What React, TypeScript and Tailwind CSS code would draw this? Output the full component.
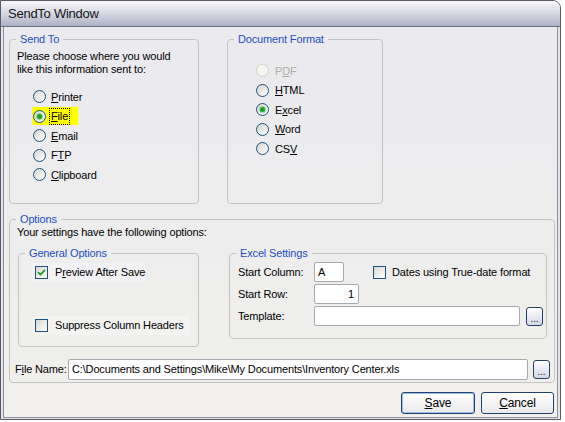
import React from "react";

function Radio({ checked = false, disabled = false }: { checked?: boolean; disabled?: boolean }) {
  return (
    <span
      className={
        disabled
          ? "flex h-[13px] w-[13px] shrink-0 items-center justify-center rounded-full border border-[#d2d0c6] bg-[#f5f5f2]"
          : "flex h-[13px] w-[13px] shrink-0 items-center justify-center rounded-full border border-[#1c5180] bg-linear-to-br from-[#d4d4ce] to-white"
      }
    >
      {checked && <span className="h-[5px] w-[5px] rounded-full bg-[#21a121] shadow-[0_0_0_1px_#9ad69a]" />}
    </span>
  );
}

function Check({ checked = false }: { checked?: boolean }) {
  return (
    <span className="flex h-[13px] w-[13px] shrink-0 items-center justify-center border border-[#1c5180] bg-linear-to-br from-[#d8d8d2] to-white">
      {checked && (
        <svg width="9" height="9" viewBox="0 0 9 9">
          <path d="M1 4.2 L3.4 6.6 L8 1.8" fill="none" stroke="#21a121" strokeWidth="1.9" />
        </svg>
      )}
    </span>
  );
}

function Group({ title, className, children }: { title: string; className: string; children?: React.ReactNode }) {
  return (
    <fieldset className={className}>
      <legend className="ml-[6px] whitespace-nowrap px-[4px] leading-[13px] text-[#1e4fbf]">{title}</legend>
      {children}
    </fieldset>
  );
}

function Dots() {
  return (
    <span className="flex h-[19px] w-[17px] shrink-0 items-end justify-center rounded-[3px] border border-[#25416a] bg-linear-to-b from-white to-[#d3d7e6] pb-[2px] text-[10px] leading-[8px] text-[#222]">
      ...
    </span>
  );
}

function Field({ className, children }: { className: string; children?: React.ReactNode }) {
  return <div className={className}>{children}</div>;
}

export default function App() {
  return (
    <div className="relative h-[422px] w-[565px] overflow-hidden whitespace-nowrap bg-white font-['Liberation_Sans',Arial,sans-serif] text-[11px] tracking-[-0.15px] text-black">
      <div className="flex h-[420px] w-[561px] flex-col overflow-hidden rounded-tr-[8px] border border-[#575a68]">
        <div className="flex h-[25px] shrink-0 items-center bg-linear-to-b from-[#f7f7fa] via-[#d6d7e2] to-[#aeb1c6] pl-[7px] text-[13px] tracking-[-0.25px] text-[#151515]">
          SendTo Window
        </div>
        <div className="flex flex-1 flex-col border-t border-[#6c6f7e]">
          <div className="flex flex-1 flex-col border-x-2 border-b border-[#e3e3ea]">
            <div className="flex flex-1 flex-col border-x border-b border-[#8d8f9c] bg-linear-to-b from-[#eaeaef] to-[#f1f0ec] pl-[5px] pt-[6px]">
              {/* Row 1 */}
              <div className="flex">
                <Group title="Send To" className="h-[171px] w-[190px] rounded-[4px] border border-[#c4c4c2]">
                  <div className="px-[7px] pt-[4px] leading-[13px]">
                    <div>Please choose where you would</div>
                    <div>like this information sent to:</div>
                  </div>
                  <div className="mt-[11px] flex flex-col pl-[23px]">
                    <div className="flex h-[19.5px] items-center gap-[5px]">
                      <Radio />
                      <span>
                        <span className="underline">P</span>rinter
                      </span>
                    </div>
                    <div className="flex h-[19.5px] items-center">
                      <div className="-ml-[1px] flex h-[18px] w-[46px] items-center gap-[4px] bg-[#ffff00] pl-[1px]">
                        <Radio checked />
                        <span className="px-[1px] leading-[15px] outline-1 outline-dotted outline-black">
                          <span className="underline">F</span>ile
                        </span>
                      </div>
                    </div>
                    <div className="flex h-[19.5px] items-center gap-[5px]">
                      <Radio />
                      <span>
                        <span className="underline">E</span>mail
                      </span>
                    </div>
                    <div className="flex h-[19.5px] items-center gap-[5px]">
                      <Radio />
                      <span>
                        F<span className="underline">T</span>P
                      </span>
                    </div>
                    <div className="flex h-[19.5px] items-center gap-[5px]">
                      <Radio />
                      <span>
                        <span className="underline">C</span>lipboard
                      </span>
                    </div>
                  </div>
                </Group>
                <Group title="Document Format" className="ml-[28px] h-[171px] w-[156px] rounded-[4px] border border-[#c4c4c2]">
                  <div className="flex flex-col pl-[28px] pt-[15px]">
                    <div className="flex h-[19.5px] items-center gap-[6px] text-[#b0aea4]">
                      <Radio disabled />
                      <span>
                        P<span className="underline">D</span>F
                      </span>
                    </div>
                    <div className="flex h-[19.5px] items-center gap-[6px]">
                      <Radio />
                      <span>
                        <span className="underline">H</span>TML
                      </span>
                    </div>
                    <div className="flex h-[19.5px] items-center gap-[6px]">
                      <Radio checked />
                      <span>
                        E<span className="underline">x</span>cel
                      </span>
                    </div>
                    <div className="flex h-[19.5px] items-center gap-[6px]">
                      <Radio />
                      <span>
                        <span className="underline">W</span>ord
                      </span>
                    </div>
                    <div className="flex h-[19.5px] items-center gap-[6px]">
                      <Radio />
                      <span>
                        CS<span className="underline">V</span>
                      </span>
                    </div>
                  </div>
                </Group>
              </div>

              {/* Options */}
              <Group title="Options" className="mt-[9px] h-[170px] w-[546px] rounded-[4px] border border-[#c4c4c2]">
                <div className="pl-[7px] leading-[13px]">Your settings have the following options:</div>
                <div className="mt-[8px] flex items-start pl-[8px]">
                  <Group title="General Options" className="h-[100px] w-[181px] rounded-[4px] border border-[#c4c4c2]">
                    <div className="flex flex-col gap-[34px] pl-[13px] pt-[3px]">
                      <div className="flex h-[19px] w-[113px] items-center gap-[7px] bg-[#f2f2f4] pl-[3px]">
                        <Check checked />
                        <span>
                          P<span className="underline">r</span>eview After Save
                        </span>
                      </div>
                      <div className="flex h-[19px] w-[158px] items-center gap-[7px] bg-[#f3f3f2] pl-[3px]">
                        <Check />
                        <span>Suppress Column Headers</span>
                      </div>
                    </div>
                  </Group>
                  <Group title="Excel Settings" className="ml-[30px] h-[92px] w-[318px] rounded-[4px] border border-[#c4c4c2]">
                    <div className="flex flex-col pl-[8px] pt-[2px]">
                      <div className="flex h-[20px] items-center">
                        <span className="w-[76px]">Start Column:</span>
                        <Field className="flex h-[20px] w-[30px] items-center rounded-[2px] border border-[#a6a9b0] bg-white pl-[3px]">A</Field>
                        <span className="ml-[29px]">
                          <Check />
                        </span>
                        <span className="ml-[6px]">Dates using True-date format</span>
                      </div>
                      <div className="mt-[2px] flex h-[20px] items-center">
                        <span className="w-[76px]">Start Row:</span>
                        <Field className="flex h-[20px] w-[45px] items-center justify-end rounded-[2px] border border-[#a6a9b0] bg-white pr-[4px]">1</Field>
                      </div>
                      <div className="mt-[2px] flex h-[20px] items-center">
                        <span className="w-[76px]">Template:</span>
                        <Field className="h-[20px] w-[206px] rounded-[2px] border border-[#a6a9b0] bg-white" />
                        <span className="ml-[6px]">
                          <Dots />
                        </span>
                      </div>
                    </div>
                  </Group>
                </div>
                <div className="mt-[12px] flex items-center pl-[5px]">
                  <span className="w-[53px]">
                    F<span className="underline">i</span>le Name:
                  </span>
                  <Field className="flex h-[21px] w-[460px] items-center rounded-[2px] border border-[#a6a9b0] bg-white pl-[3px]">
                    C:\Documents and Settings\Mike\My Documents\Inventory Center.xls
                  </Field>
                  <span className="ml-[5px]">
                    <Dots />
                  </span>
                </div>
              </Group>

              {/* Buttons */}
              <div className="mt-[9px] flex justify-end gap-[6px] pr-[3px]">
                <div className="flex h-[22px] w-[74px] items-center justify-center rounded-[3px] border border-[#1f3f6e] bg-linear-to-b from-white to-[#e9e9ec] text-[12px] shadow-[inset_0_0_0_1px_#9ec0ee]">
                  <span>
                    <span className="underline">S</span>ave
                  </span>
                </div>
                <div className="flex h-[22px] w-[73px] items-center justify-center rounded-[3px] border border-[#1f3f6e] bg-linear-to-b from-white to-[#e9e9ec] text-[12px]">
                  <span>
                    <span className="underline">C</span>ancel
                  </span>
                </div>
              </div>
            </div>
          </div>
        </div>
      </div>
    </div>
  );
}
